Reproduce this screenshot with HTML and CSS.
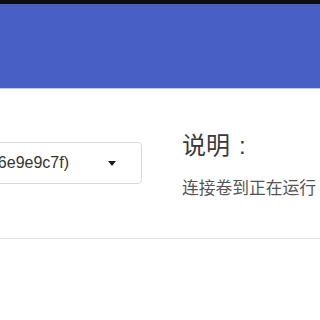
FILE: index.html
```html
<!DOCTYPE html>
<html lang="zh-CN">
<head>
<meta charset="utf-8">
<title>连接卷</title>
<link rel="stylesheet" href="styles.css">
</head>
<body>
<div class="topbar"></div>
<header class="appbar"></header>
<main class="content">
  <div class="row">
    <div class="field">
      <div class="select">
        <span class="select-text">data-volume (6e9e9c7f)</span>
        <span class="caret"></span>
      </div>
    </div>
    <div class="help">
      <h2 class="help-title">说明<span class="colon">:</span></h2>
      <p class="help-text">连接卷到正在运行</p>
    </div>
  </div>
  <div class="divider"></div>
</main>
</body>
</html>
```
FILE: styles.css
```css
html, body {
  margin: 0;
  padding: 0;
  overflow: hidden;
  background: #fff;
}
body {
  width: 320px;
  height: 320px;
  font-family: "Liberation Sans", "Noto Sans CJK SC", sans-serif;
}
.topbar {
  height: 4px;
  background: #0e0d12;
}
.appbar {
  height: 84px;
  background: #4860c6;
  box-shadow: 0 1px 0 rgba(72, 96, 198, 0.35);
}
.content {
  padding-top: 38px;
}
.row {
  display: flex;
  align-items: flex-start;
  gap: 40px;
  margin-left: -160px;
  width: 600px;
}
.field {
  padding-top: 16px;
  flex: none;
}
.select {
  box-sizing: border-box;
  width: 302px;
  height: 42px;
  border: 1px solid #d9d9d9;
  border-radius: 4px;
  display: flex;
  align-items: center;
  padding: 0 25px 0 12px;
}
.select-text {
  flex: 1;
  font-size: 16px;
  color: #333;
  white-space: nowrap;
  text-align: right;
  padding-right: 39px;
}
.caret {
  width: 0;
  height: 0;
  border-left: 4px solid transparent;
  border-right: 4px solid transparent;
  border-top: 5px solid #1e1e1e;
}
.help {
  flex: none;
}
.help-title {
  margin: 0;
  font-family: "Noto Sans CJK SC", sans-serif;
  font-size: 24px;
  font-weight: normal;
  color: #3a3a3a;
}
.colon {
  font-family: "Liberation Sans", sans-serif;
  margin-left: 9px;
}
.help-text {
  margin: 14px 0 0;
  font-family: "Noto Sans CJK SC", sans-serif;
  font-size: 16.75px;
  color: #555;
  white-space: nowrap;
}
.divider {
  margin-top: 39px;
  height: 1px;
  background: #e4e4e4;
}
```
